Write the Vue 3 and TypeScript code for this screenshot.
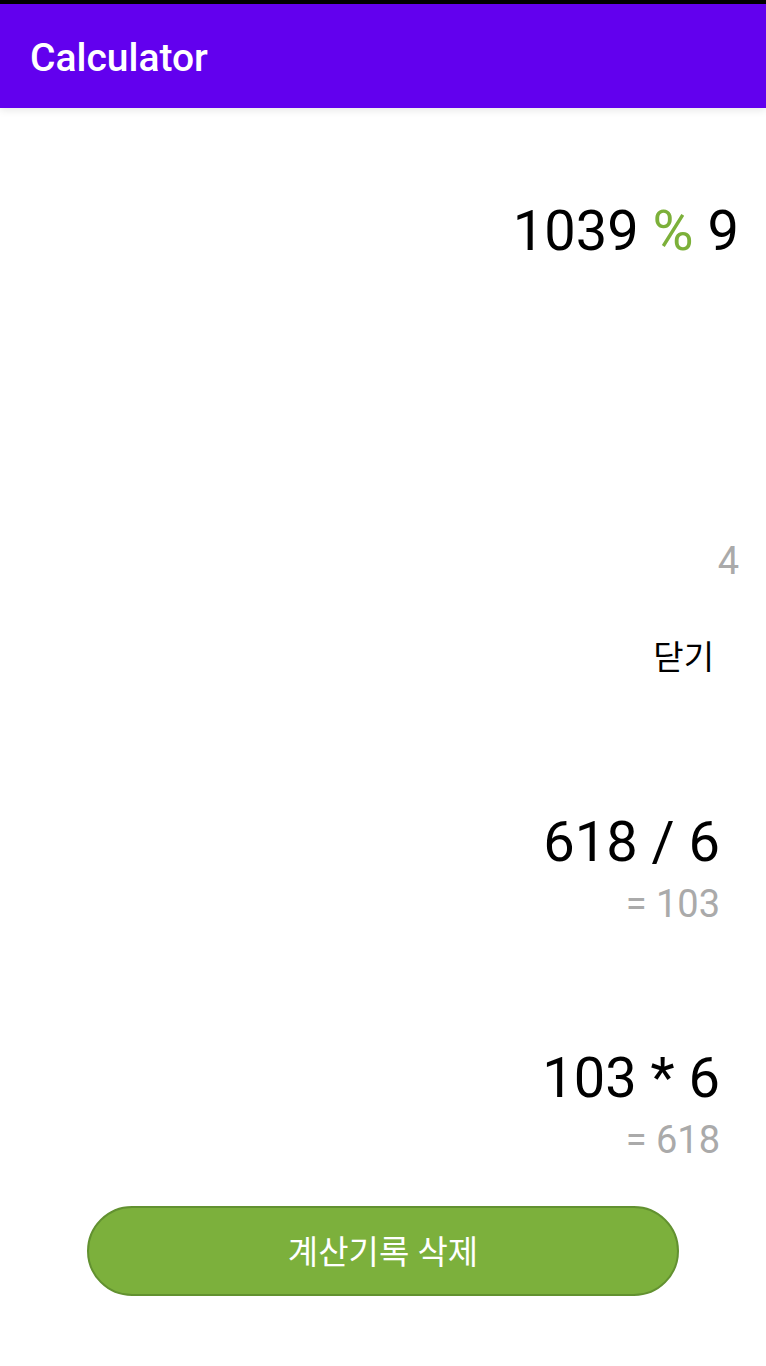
<script setup lang="ts">
interface HistoryEntry {
  id: number
  expression: string
  result: string
}

const left = '1039'
const operator = '%'
const right = '9'
const result = '4'

const history: HistoryEntry[] = [
  { id: 2, expression: '618 / 6', result: '103' },
  { id: 1, expression: '103 * 6', result: '618' },
]
</script>

<template>
  <div class="app">
    <header class="toolbar">
      <h1>Calculator</h1>
    </header>
    <main>
      <section class="display">
        <p class="expression">{{ left }} <span class="operator">{{ operator }}</span> {{ right }}</p>
        <output class="result">{{ result }}</output>
      </section>
      <section class="history">
        <button type="button" class="close">닫기</button>
        <ul class="entries">
          <li v-for="entry in history" :key="entry.id">
            <p class="expression">{{ entry.expression }}</p>
            <p class="answer">= {{ entry.result }}</p>
          </li>
        </ul>
        <button type="button" class="clear">계산기록 삭제</button>
      </section>
    </main>
  </div>
</template>

<style>
body {
  background: #fff;
}
</style>

<style scoped>
.app {
  font-family: Roboto, "Noto Sans CJK KR", sans-serif;
  color: #000;
}

.toolbar {
  display: flex;
  align-items: center;
  height: 100px;
  padding: 4px 30px 0;
  border-top: 4px solid #000;
  background: #6200ee;
  box-shadow: 0 2px 8px rgba(0, 0, 0, 0.1);
}

h1 {
  margin: 0;
  color: #fff;
  font-size: 39px;
  font-weight: 500;
  line-height: 44px;
}

p {
  margin: 0;
}

.display {
  display: flex;
  flex-direction: column;
  justify-content: space-between;
  align-items: flex-end;
  height: 385px;
  padding: 90px 27px 0;
}

.expression {
  font-size: 56px;
  line-height: 66px;
}

.operator {
  color: #7cb03a;
}

.result,
.answer {
  color: #aaa;
  font-size: 38px;
  line-height: 44px;
}

.answer {
  margin-top: 7px;
}

.history {
  display: flex;
  flex-direction: column;
  padding: 26px 0;
}

.close {
  align-self: flex-end;
  height: 92px;
  margin-right: 28px;
  padding: 0 24px;
  border: 0;
  background: transparent;
  color: #000;
  font: inherit;
  font-size: 33px;
}

.entries {
  margin: 0;
  padding: 0 46px;
  list-style: none;
  text-align: right;
}

.entries li {
  padding-top: 108px;
}

.entries li + li {
  padding-top: 119px;
}

.clear {
  width: 592px;
  max-width: 80%;
  height: 90px;
  margin: 44px auto 0;
  padding: 0 0 2px;
  border: 2px solid #629130;
  border-radius: 45px;
  background: #7cb03c;
  color: #fff;
  font: inherit;
  font-size: 33px;
}
</style>
